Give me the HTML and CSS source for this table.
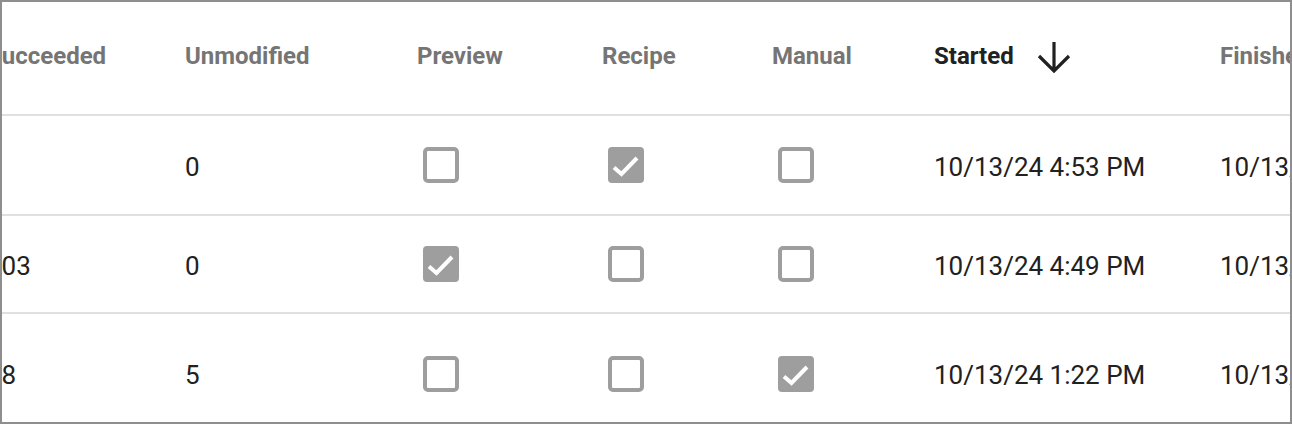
FILE: index.html
```html
<!DOCTYPE html>
<html>
<head>
<meta charset="utf-8">
<link rel="stylesheet" href="styles.css">
</head>
<body>
<div class="frame">
  <div class="table">
    <div class="row head">
      <div class="cell">Succeeded</div>
      <div class="cell">Unmodified</div>
      <div class="cell">Preview</div>
      <div class="cell">Recipe</div>
      <div class="cell">Manual</div>
      <div class="cell sorted">Started
        <svg class="arrow" width="34" height="34" viewBox="0 0 34 34"><path d="M17 2V31M2 16L17 31L32 16" fill="none" stroke="#212121" stroke-width="3.2"/></svg>
      </div>
      <div class="cell">Finished</div>
    </div>
    <div class="row r1">
      <div class="cell txt"></div>
      <div class="cell txt">0</div>
      <div class="cell"><svg class="cb" width="36" height="36" viewBox="0 0 36 36"><rect x="2" y="2" width="32" height="32" rx="3" fill="none" stroke="#9e9e9e" stroke-width="4"/></svg></div>
      <div class="cell"><svg class="cb" width="36" height="36" viewBox="0 0 36 36"><rect x="0" y="0" width="36" height="36" rx="4" fill="#9e9e9e"/><path d="M6 20.5L13.5 27L29 11" fill="none" stroke="#fff" stroke-width="4"/></svg></div>
      <div class="cell"><svg class="cb" width="36" height="36" viewBox="0 0 36 36"><rect x="2" y="2" width="32" height="32" rx="3" fill="none" stroke="#9e9e9e" stroke-width="4"/></svg></div>
      <div class="cell txt">10/13/24 4:53 PM</div>
      <div class="cell txt">10/13/24 4:54 PM</div>
    </div>
    <div class="row r2">
      <div class="cell txt">103</div>
      <div class="cell txt">0</div>
      <div class="cell"><svg class="cb" width="36" height="36" viewBox="0 0 36 36"><rect x="0" y="0" width="36" height="36" rx="4" fill="#9e9e9e"/><path d="M6 20.5L13.5 27L29 11" fill="none" stroke="#fff" stroke-width="4"/></svg></div>
      <div class="cell"><svg class="cb" width="36" height="36" viewBox="0 0 36 36"><rect x="2" y="2" width="32" height="32" rx="3" fill="none" stroke="#9e9e9e" stroke-width="4"/></svg></div>
      <div class="cell"><svg class="cb" width="36" height="36" viewBox="0 0 36 36"><rect x="2" y="2" width="32" height="32" rx="3" fill="none" stroke="#9e9e9e" stroke-width="4"/></svg></div>
      <div class="cell txt">10/13/24 4:49 PM</div>
      <div class="cell txt">10/13/24 4:50 PM</div>
    </div>
    <div class="row r3">
      <div class="cell txt">18</div>
      <div class="cell txt">5</div>
      <div class="cell"><svg class="cb" width="36" height="36" viewBox="0 0 36 36"><rect x="2" y="2" width="32" height="32" rx="3" fill="none" stroke="#9e9e9e" stroke-width="4"/></svg></div>
      <div class="cell"><svg class="cb" width="36" height="36" viewBox="0 0 36 36"><rect x="2" y="2" width="32" height="32" rx="3" fill="none" stroke="#9e9e9e" stroke-width="4"/></svg></div>
      <div class="cell"><svg class="cb" width="36" height="36" viewBox="0 0 36 36"><rect x="0" y="0" width="36" height="36" rx="4" fill="#9e9e9e"/><path d="M6 20.5L13.5 27L29 11" fill="none" stroke="#fff" stroke-width="4"/></svg></div>
      <div class="cell txt">10/13/24 1:22 PM</div>
      <div class="cell txt">10/13/24 1:23 PM</div>
    </div>
  </div>
</div>
</body>
</html>
```

FILE: styles.css
```css
html, body {
  margin: 0;
  padding: 0;
  background: #fff;
}
.frame {
  box-sizing: border-box;
  width: 1292px;
  height: 424px;
  border: 2px solid #8e8e8e;
  overflow: hidden;
  font-family: Roboto, "Liberation Sans", sans-serif;
}
.table {
  margin-left: -15px;
  width: 1500px;
}
.row {
  display: grid;
  grid-template-columns: 198px 232px 185px 170px 162px 286px 250px;
  align-items: center;
  border-bottom: 2px solid #e0e0e0;
  white-space: nowrap;
}
.head {
  box-sizing: border-box;
  height: 114px;
  padding-bottom: 4px;
  font-size: 24px;
  font-weight: 700;
  color: #757575;
}
.r1 { height: 98px; }
.r2 { height: 96px; }
.r3 { height: 119px; border-bottom: none; }
.cell {
  display: flex;
  align-items: center;
}
.txt {
  font-size: 26px;
  color: #212121;
  padding-top: 3px;
}
.sorted {
  color: #212121;
}
.arrow {
  margin-left: 23px;
  margin-top: 2px;
}
.cb {
  margin-left: 6px;
  display: block;
}
```
